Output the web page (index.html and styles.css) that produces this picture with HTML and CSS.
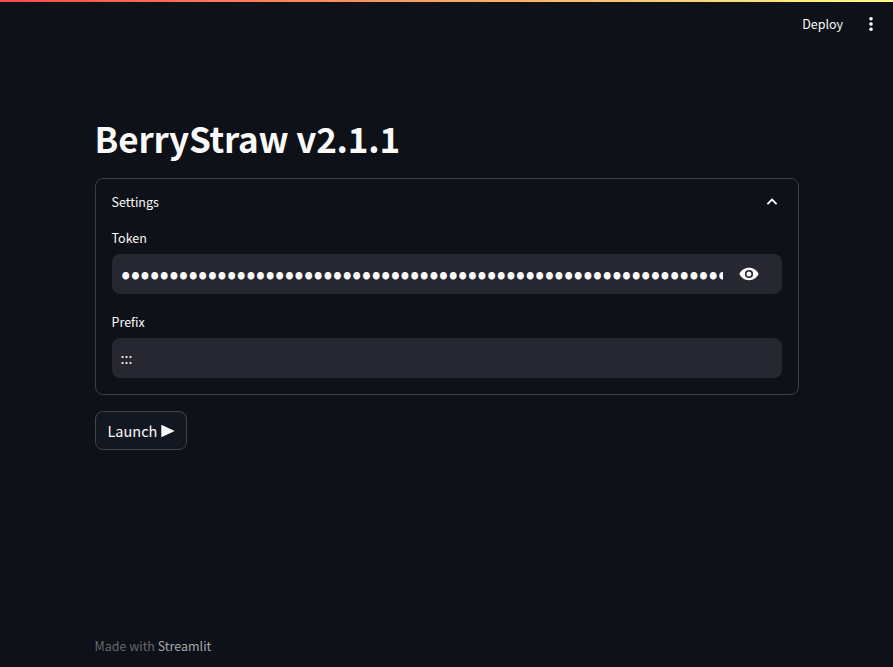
FILE: index.html
```html
<!DOCTYPE html>
<html lang="en">
<head>
<meta charset="utf-8">
<title>BerryStraw</title>
<link rel="stylesheet" href="styles.css">
</head>
<body>
<div class="decoration"></div>
<header class="toolbar">
  <span class="deploy">Deploy</span>
  <svg class="kebab" viewBox="0 0 16 16" fill="currentColor"><circle cx="8" cy="2.700" r="1.8"/><circle cx="8" cy="8" r="1.8"/><circle cx="8" cy="13.300" r="1.8"/></svg>
</header>
<main class="content">
  <h1>BerryStraw v2.1.1</h1>
  <section class="expander">
    <div class="summary"><span>Settings</span>
      <svg class="chevron" viewBox="0 0 16 16" fill="none" stroke="currentColor" stroke-width="1.9"><path d="M3.400 10.200 8 5.600l4.600 4.600"/></svg>
    </div>
    <label class="label" for="token">Token</label>
    <div class="field">
      <input id="token" class="token" type="password" value="0123456789012345678901234567890123456789012345678901234567890123456789">
      <svg class="eye" viewBox="0 0 20 14" fill="currentColor" fill-rule="evenodd"><path d="M10 .8C5.700.8 2 3.300.4 7 2 10.700 5.700 13.200 10 13.200S18 10.700 19.600 7C18 3.300 14.300.8 10 .8ZM10 11.100A4.100 4.100 0 1 1 10 2.900a4.100 4.100 0 0 1 0 8.200ZM10 4.500a2.500 2.500 0 1 0 0 5 2.500 2.500 0 0 0 0-5Z"/></svg>
    </div>
    <label class="label prefix-label" for="prefix">Prefix</label>
    <div class="field"><input id="prefix" class="prefix" type="text" value=":::"></div>
  </section>
  <button class="launch"><span>Launch</span><svg class="play" viewBox="0 0 14 14" fill="currentColor"><path d="M.3.700 13.700 7 .3 13.300Z"/></svg></button>
</main>
<footer class="footer">Made with <span class="brand">Streamlit</span></footer>
</body>
</html>
```
FILE: styles.css
```css
* { box-sizing: border-box; }
body {
  margin: 0;
  height: 667px;
  overflow: hidden;
  display: flex;
  flex-direction: column;
  background: #0e1117;
  color: #fafafa;
  font: 12.5px/20px "Noto Sans CJK JP", sans-serif;
}
.decoration { height: 2px; background: linear-gradient(90deg, #ff4b4b, #fffd80); }
.toolbar { height: 44px; display: flex; align-items: center; justify-content: flex-end; padding-right: 14px; gap: 20px; }
.kebab { width: 16px; height: 16px; }
.content { width: 704px; margin: 67px 0 0 95px; }
h1 { margin: 0 0 0 -0.4px; height: 65px; font-size: 35px; line-height: 50px; font-weight: 700; letter-spacing: -0.2px; white-space: nowrap; }
.expander { height: 217px; border: 1px solid #3b3d42; border-radius: 8px; padding: 13px 16px 0 15.5px; }
.summary { height: 20px; display: flex; justify-content: space-between; align-items: center; padding-right: 2px; }
.chevron { width: 16px; height: 16px; }
.label { display: block; margin: 16px 0 6px; }
.prefix-label { margin-top: 18px; }
.field { height: 40px; display: flex; align-items: center; background: #262730; border-radius: 8px; padding: 0 9px; margin-left: 0.5px; }
input { border: 0; padding: 0; outline: 0; background: none; color: inherit; font-family: inherit; height: 40px; }
.token { width: 602px; font-size: 27.5px; letter-spacing: 0.28px; padding-bottom: 5px; }
.eye { width: 20px; height: 14px; margin-left: 16px; }
.prefix { width: 100%; font-size: 14px; text-indent: -0.4px; }
.launch { display: flex; align-items: center; width: 92px; height: 39px; margin-top: 16px; padding: 0 0 0 11.5px; gap: 3.5px; border: 1px solid #41444c; border-radius: 8px; background: #131720; color: inherit; font: 14.5px/24px "Noto Sans CJK JP", sans-serif; }
.play { width: 14px; height: 14px; flex: none; }
.footer { margin: auto 0 11px 94.5px; color: #67696e; }
.brand { color: #a5a6a9; }
```
